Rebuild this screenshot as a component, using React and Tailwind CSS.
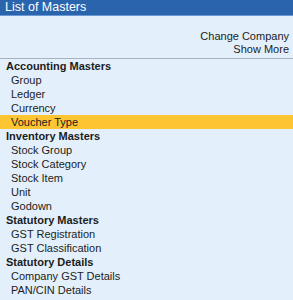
import React from "react";

const sections = [
  {
    title: "Accounting Masters",
    items: ["Group", "Ledger", "Currency", "Voucher Type"],
  },
  {
    title: "Inventory Masters",
    items: ["Stock Group", "Stock Category", "Stock Item", "Unit", "Godown"],
  },
  {
    title: "Statutory Masters",
    items: ["GST Registration", "GST Classification"],
  },
  {
    title: "Statutory Details",
    items: ["Company GST Details", "PAN/CIN Details"],
  },
];

const App = () => {
  const selected = "Voucher Type";

  return (
    <div
      className="w-[293px] h-[300px] overflow-hidden bg-[#e3f0fb] text-[11px] text-[#1c1c1c]"
      style={{ fontFamily: '"Liberation Sans", Arial, sans-serif' }}
    >
      {/* Title bar */}
      <div className="h-[15px] bg-[#2a64ad] text-white text-[12.5px] px-[5px] leading-[15px] border-b border-[#6a9ad6] box-content">
        List of Masters
      </div>

      {/* Top links */}
      <div className="h-[43px] flex flex-col items-end justify-end pr-[4px] pb-[2px] border-b border-[#a9b3bd] leading-[13px]">
        <div>Change Company</div>
        <div>Show More</div>
      </div>

      {/* Master list */}
      <div>
        {sections.map((s) => (
          <div key={s.title}>
            <div className="h-[14px] leading-[14px] px-[6px] font-bold">
              {s.title}
            </div>
            {s.items.map((item) => (
              <div
                key={item}
                className={`h-[14px] leading-[14px] pl-[11px] ${
                  item === selected ? "bg-[#fec532]" : ""
                }`}
              >
                {item}
              </div>
            ))}
          </div>
        ))}
      </div>
    </div>
  );
};

export default App;
